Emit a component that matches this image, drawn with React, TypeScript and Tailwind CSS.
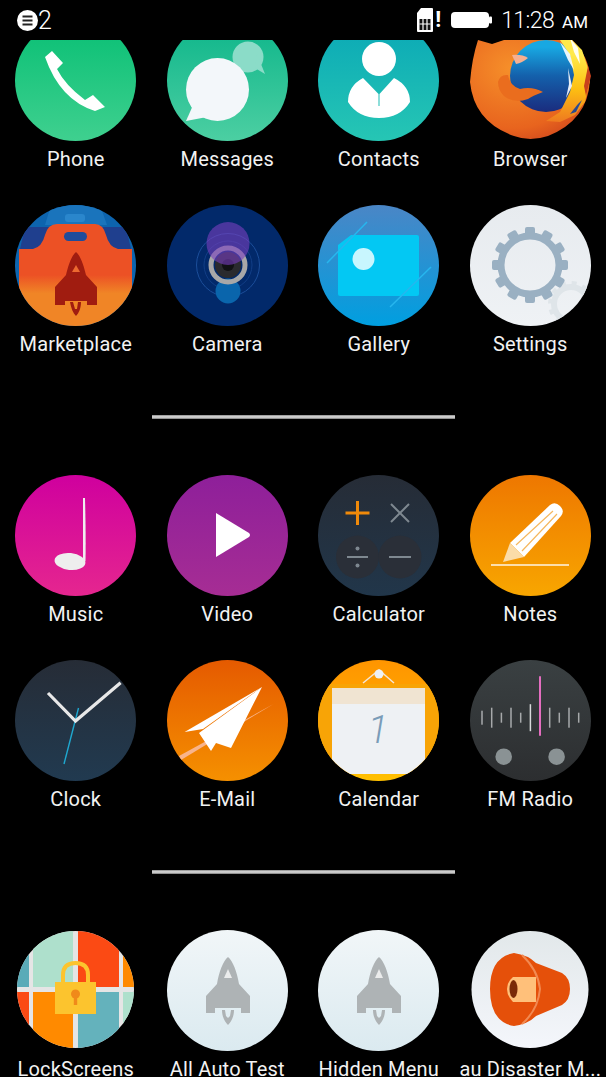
import type { ReactNode } from 'react';

function Disc({ id, from, to, children }: { id: string; from: string; to: string; children?: ReactNode }) {
  return (
    <svg viewBox="0 0 121 121" className="w-[121px] h-[121px] rounded-full overflow-hidden">
      <defs>
        <linearGradient id={id} x1="0" y1="0" x2="0" y2="1">
          <stop offset="0" stopColor={from} />
          <stop offset="1" stopColor={to} />
        </linearGradient>
      </defs>
      <rect width="121" height="121" fill={`url(#${id})`} />
      {children}
    </svg>
  );
}

function Rocket({ fill }: { fill: string }) {
  return (
    <>
      <path d="M61 27 C66 31 70 42 72 54 L83 66 L83 83 L74 83 L74 78 L48 78 L48 83 L39 83 L39 66 L50 54 C52 42 56 31 61 27Z" fill={fill} />
      <path d="M57 48 L61 39 L65 48Z" fill="#fff" opacity="0.75" />
      <path d="M55 80 L58 80 L59 86 L61 88 L63 86 L64 80 L67 80 C67 87 64 92 61 95 C58 92 55 87 55 80Z" fill={fill} />
    </>
  );
}

function Gear() {
  const teeth = [0, 30, 60, 90, 120, 150, 180, 210, 240, 270, 300, 330];
  return (
    <g>
      {teeth.map((a) => (
        <rect key={a} x="55" y="22" width="10" height="10" rx="2" fill="#9ab0c2" transform={`rotate(${a} 60 60)`} />
      ))}
      <circle cx="60" cy="60" r="29" fill="none" stroke="#9ab0c2" strokeWidth="7" />
    </g>
  );
}

const PhoneIcon = () => (
  <Disc id="phone" from="#08bf74" to="#3fd08f">
    <path d="M30 37 L37 31 L48 43 L42 49 Q50 65 70 80 L78 75 L90 87 L80 91 Q45 80 30 37Z" fill="#fff" />
  </Disc>
);

const MessagesIcon = () => (
  <Disc id="messages" from="#0db58a" to="#4ccfa2">
    <circle cx="81" cy="37" r="15.5" fill="#8bdcc8" />
    <path d="M88 48 L98 54 L90 34Z" fill="#8bdcc8" />
    <ellipse cx="50.5" cy="69.5" rx="31.5" ry="31.5" fill="#f3f7fa" />
    <path d="M19 101 L27 83 L40 97Z" fill="#f3f7fa" />
  </Disc>
);

const ContactsIcon = () => (
  <Disc id="contacts" from="#0aa8b6" to="#26c6b4">
    <circle cx="61" cy="39" r="17" fill="#fff" />
    <path d="M45 58 L60.5 74 L60.5 86 L61.5 86 L61.5 74 L76 58 Q92 66 92 82 Q82 98 61 98 Q40 98 30 82 Q30 66 45 58Z" fill="#fff" />
  </Disc>
);

const BrowserIcon = () => (
  <svg viewBox="0 0 121 121" className="w-[121px] h-[121px]">
    <defs>
      <radialGradient id="ffBody" cx="0.35" cy="0.3" r="0.85">
        <stop offset="0" stopColor="#f6902a" />
        <stop offset="0.7" stopColor="#e8641e" />
        <stop offset="1" stopColor="#c9401c" />
      </radialGradient>
      <linearGradient id="ffGlobe" x1="0" y1="0" x2="0" y2="1">
        <stop offset="0.1" stopColor="#18a8e2" />
        <stop offset="0.5" stopColor="#1460ab" />
        <stop offset="1" stopColor="#1a2c7e" />
      </linearGradient>
      <linearGradient id="ffFlame" x1="0" y1="0" x2="0" y2="1">
        <stop offset="0.2" stopColor="#ffe94a" />
        <stop offset="0.6" stopColor="#fdc012" />
        <stop offset="1" stopColor="#ee7a20" />
      </linearGradient>
    </defs>
    <path d="M8 20 L22 24 L40 18 L100 18 Q120 36 120 60 Q118 100 78 116 Q60 122 44 116 Q4 102 0 62 Q2 38 8 20Z" fill="url(#ffBody)" />
    <circle cx="76" cy="56" r="36" fill="url(#ffGlobe)" />
    <path d="M42 35 Q52 34 58 38 Q52 43 46 44Z" fill="#f6b090" />
    <path d="M28 62 Q30 54 38 55 Q40 66 50 69 Q62 66 73 72 Q62 76 58 79 Q44 84 34 76 Q28 70 28 62Z" fill="#ea6d1e" />
    <path d="M90 20 L100 18 L112 30 L118 48 L120 60 L115 82 L105 95 L90 102 L76 101 L90 92 L96 80 L100 72 L104 55 L100 35Z" fill="url(#ffFlame)" />
    <path d="M90 22 L100 34 L104 50 L98 40Z M100 18 L108 28 L110 44 L104 32Z M98 48 L102 66 L96 78 L99 64Z" fill="#fff" opacity="0.9" />
    <path d="M118 46 L121 56 L116 76 L114 66Z" fill="#c9401c" />
    <path d="M108 84 L112 80 L106 92 L100 94Z" fill="#2a4a90" />
  </svg>
);

const MarketplaceIcon = () => (
  <svg viewBox="0 0 121 121" className="w-[121px] h-[121px] rounded-full overflow-hidden">
    <defs>
      <linearGradient id="marketBag" x1="0" y1="0" x2="0" y2="1">
        <stop offset="0.5" stopColor="#ec5125" />
        <stop offset="0.68" stopColor="#f08526" />
      </linearGradient>
    </defs>
    <rect width="121" height="121" fill="#0d64ae" />
    <path d="M36 0 L85 0 L92 20 L30 20Z" fill="#1a74bc" />
    <rect x="50" y="9" width="20" height="8" rx="3" fill="#2a86cc" />
    <path d="M10 22 L35 22 L35 44 L5 44Z M86 22 L111 22 L116 44 L86 44Z" fill="#1f3f8e" />
    <path d="M4 44 L18 44 Q27 42 30 30 Q33 19 42 19 L80 19 Q88 19 91 30 Q94 42 103 44 L117 44 L117 121 L4 121Z" fill="url(#marketBag)" />
    <rect x="49" y="27" width="23" height="9" rx="4.5" fill="#1f4c9a" />
    <path d="M61 47 C66 51 69 62 71 70 L82 82 L82 100 L72 100 L72 96 L50 96 L50 100 L40 100 L40 82 L51 70 C53 62 56 51 61 47Z" fill="#a01c10" />
    <path d="M57 67 L61 60 L65 67Z" fill="#ec6a30" />
    <path d="M55 97 L58 97 L60 104 L62 104 L63 97 L66 97 C66 103 64 108 61 111 C58 108 56 103 55 97Z" fill="#a01c10" />
  </svg>
);

const CameraIcon = () => (
  <Disc id="camera" from="#02296a" to="#02296a">
    <circle cx="61" cy="60" r="31.5" fill="none" stroke="#1c4e9a" strokeWidth="1" />
    <circle cx="61" cy="60" r="24" fill="none" stroke="#123e86" strokeWidth="1" />
    <circle cx="61" cy="86" r="12.5" fill="#0a65ac" />
    <circle cx="61" cy="60" r="13" fill="#2a2a2e" />
    <circle cx="61" cy="60" r="6" fill="#111114" />
    <circle cx="61" cy="60" r="17" fill="none" stroke="#a8a8a8" strokeWidth="5" />
    <circle cx="61" cy="38.5" r="21.5" fill="#7a3fc0" opacity="0.6" />
  </Disc>
);

const GalleryIcon = () => (
  <Disc id="gallery" from="#4a86c6" to="#009fe0">
    <path d="M20 40 L33 30 L99 30 Q101 30 101 32 L101 89 Q101 91 99 91 L22 91 Q20 91 20 89Z" fill="#03c8f3" />
    <circle cx="45.5" cy="54" r="11" fill="#c8f6fe" />
    <path d="M9 58 L49 17 M72 102 L113 62" stroke="#27b6ee" strokeWidth="1.5" />
  </Disc>
);

const SettingsIcon = () => (
  <Disc id="settings" from="#e7ebef" to="#eff2f5">
    <circle cx="101" cy="99" r="17" fill="none" stroke="#dfe5e9" strokeWidth="6" />
    <circle cx="101" cy="99" r="21" fill="none" stroke="#dfe5e9" strokeWidth="4" strokeDasharray="5 6" />
    <Gear />
  </Disc>
);

const MusicIcon = () => (
  <Disc id="music" from="#cf009e" to="#e5268f">
    <path d="M68 23 L70 23 Q71 60 70.5 86 L68 86Z" fill="#eee" />
    <ellipse cx="55" cy="86.5" rx="15.5" ry="8.5" fill="#eee" transform="rotate(6 55 86.5)" />
  </Disc>
);

const VideoIcon = () => (
  <Disc id="video" from="#8e1f9a" to="#a62d94">
    <path d="M49 38 L82 58 Q84 60 82 62 L49 82Z" fill="#fff" />
  </Disc>
);

const CalculatorIcon = () => (
  <Disc id="calc" from="#262c36" to="#21364a">
    <circle cx="39.5" cy="82" r="21.5" fill="#2a2f38" />
    <circle cx="82" cy="82" r="21.5" fill="#2a2f38" />
    <path d="M27.5 38 L51.5 38 M39.5 26 L39.5 50" stroke="#f08a0a" strokeWidth="3" />
    <path d="M73 29 L91 47 M91 29 L73 47" stroke="#7e8890" strokeWidth="2" />
    <path d="M29 82 L50 82 M71 82 L93 82" stroke="#7e8890" strokeWidth="2" />
    <circle cx="39.5" cy="73.5" r="2" fill="#7e8890" />
    <circle cx="39.5" cy="90.5" r="2" fill="#7e8890" />
  </Disc>
);

const NotesIcon = () => (
  <Disc id="notes" from="#ee7700" to="#f8a600">
    <path d="M40 68 L80 30 Q85 26 90 31 Q95 36 91 41 L54 82Z" fill="#fff" />
    <path d="M33 87 L40 68 L54 82Z" fill="#fbdca8" />
    <path d="M46 70 L83 36 M52 76 L87 39" stroke="#f5b860" strokeWidth="1.2" />
    <path d="M21 90 L99 90" stroke="#fff" strokeWidth="1.6" opacity="0.9" />
  </Disc>
);

const ClockIcon = () => (
  <Disc id="clock" from="#262c36" to="#213a50">
    <path d="M63.5 48 L49 104" stroke="#1fa8d0" strokeWidth="1.4" />
    <path d="M33 33 L60.5 61 L105.6 22.7" fill="none" stroke="#e8e8e8" strokeWidth="3.2" />
  </Disc>
);

const EmailIcon = () => (
  <Disc id="email" from="#e55a00" to="#f59000">
    <path d="M12 96 L106.5 44 L14 100Z" fill="#f8b48c" />
    <path d="M95 27 L17.6 72 L36 69Z" fill="#fff" />
    <path d="M95 27 L32 73 L44 91 L49 83 L64 88Z" fill="#fff" />
  </Disc>
);

const CalendarIcon = () => (
  <Disc id="calendar" from="#ff9500" to="#ffc000">
    <rect x="0" y="24" width="121" height="90" fill="#f8a406" />
    <path d="M45 23 L61 10 L76 23" fill="none" stroke="#f3e6d6" strokeWidth="1.5" />
    <circle cx="61" cy="14" r="4.5" fill="#eef1f4" />
    <rect x="14" y="28" width="93" height="16" fill="#f0e4d2" />
    <rect x="14" y="44" width="93" height="70" fill="#eef1f4" />
    <text x="60" y="83" textAnchor="middle" fontFamily="Roboto, sans-serif" fontStyle="italic" fontWeight="300" fontSize="38" fill="#7a9cb8">1</text>
  </Disc>
);

const RadioIcon = () => {
  const bars = [
    [12, 7], [21.7, 10], [31.4, 5], [41, 10], [50.7, 5], [60.4, 13.5], [79.7, 10], [89.3, 5], [99, 10], [108.7, 5],
  ];
  return (
    <Disc id="radio" from="#3a4042" to="#2c2e30">
      {bars.map(([x, h]) => (
        <rect key={x} x={x - 0.75} y={57.7 - h} width="1.5" height={h * 2} fill="#d8dadb" opacity={h > 12 ? 1 : 0.7} />
      ))}
      <rect x="69" y="16" width="2" height="60" rx="1" fill="#e46ec0" />
      <circle cx="33.7" cy="96.7" r="8.3" fill="#8a9294" />
      <circle cx="86.6" cy="96.7" r="8.3" fill="#8a9294" />
    </Disc>
  );
};

const LockIcon = () => (
  <svg viewBox="0 0 121 121" className="w-[121px] h-[121px]">
    <defs>
      <clipPath id="lockClip">
        <circle cx="60.5" cy="59.5" r="58.5" />
      </clipPath>
    </defs>
    <g clipPath="url(#lockClip)">
      <rect x="0" y="0" width="121" height="121" fill="#e5e5e5" />
      <rect x="0" y="0" width="14" height="57" fill="#5aabb8" />
      <rect x="18" y="0" width="40" height="57" fill="#aee0cc" />
      <rect x="63" y="0" width="41" height="57" fill="#fb4a14" />
      <rect x="108" y="0" width="13" height="57" fill="#ff8a00" />
      <rect x="0" y="62" width="14" height="59" fill="#fb4a14" />
      <rect x="18" y="62" width="40" height="59" fill="#ff8a00" />
      <rect x="63" y="62" width="41" height="59" fill="#64b2bc" />
      <rect x="108" y="62" width="13" height="59" fill="#aee0cc" />
    </g>
    <path d="M48 53 L48 45 Q48 33 60.5 33 Q73 33 73 45 L73 53" fill="none" stroke="#fcc42e" strokeWidth="4" />
    <rect x="40" y="52" width="41" height="32" fill="#fcc42e" />
    <circle cx="60.5" cy="64" r="4.5" fill="#f08a1a" />
    <rect x="58.8" y="65" width="3.4" height="10" fill="#f08a1a" />
  </svg>
);

const TestIcon = ({ id }: { id: string }) => (
  <Disc id={id} from="#f1f6f8" to="#dbeaf0">
    <Rocket fill="#aeb3b5" />
  </Disc>
);

const DisasterIcon = () => (
  <svg viewBox="0 0 121 121" className="w-[121px] h-[121px]">
    <defs>
      <linearGradient id="disaster" x1="0" y1="0" x2="0" y2="1">
        <stop offset="0" stopColor="#e2e8ea" />
        <stop offset="1" stopColor="#f4f6fb" />
      </linearGradient>
    </defs>
    <circle cx="60" cy="59.5" r="58.5" fill="url(#disaster)" />
    <path d="M44 23 Q58 25 66 33 L92 43 Q100 48 100 59 Q100 70 92 75 L66 86 Q58 94 44 96 Q20 92 20 59 Q20 27 44 23Z" fill="#e5500a" />
    <path d="M52 25 Q68 40 70 59 Q68 80 52 94" fill="none" stroke="#f28a52" strokeWidth="2" />
    <path d="M43 47 L66 47 L66 72 L43 72 Q37 66 37 59 Q37 52 43 47Z" fill="#ffc07a" />
    <ellipse cx="43.5" cy="59" rx="4" ry="9" fill="#7a2a08" />
  </svg>
);

const sectionOne = [
  { label: 'Phone', icon: <PhoneIcon /> },
  { label: 'Messages', icon: <MessagesIcon /> },
  { label: 'Contacts', icon: <ContactsIcon /> },
  { label: 'Browser', icon: <BrowserIcon /> },
  { label: 'Marketplace', icon: <MarketplaceIcon /> },
  { label: 'Camera', icon: <CameraIcon /> },
  { label: 'Gallery', icon: <GalleryIcon /> },
  { label: 'Settings', icon: <SettingsIcon /> },
];

const sectionTwo = [
  { label: 'Music', icon: <MusicIcon /> },
  { label: 'Video', icon: <VideoIcon /> },
  { label: 'Calculator', icon: <CalculatorIcon /> },
  { label: 'Notes', icon: <NotesIcon /> },
  { label: 'Clock', icon: <ClockIcon /> },
  { label: 'E-Mail', icon: <EmailIcon /> },
  { label: 'Calendar', icon: <CalendarIcon /> },
  { label: 'FM Radio', icon: <RadioIcon /> },
];

const sectionThree = [
  { label: 'LockScreens', icon: <LockIcon /> },
  { label: 'All Auto Test', icon: <TestIcon id="autotest" /> },
  { label: 'Hidden Menu', icon: <TestIcon id="hidden" /> },
  { label: 'au Disaster M...', icon: <DisasterIcon /> },
];

function AppGrid({ apps }: { apps: { label: string; icon: ReactNode }[] }) {
  return (
    <div className="grid grid-cols-4 auto-rows-[185px]">
      {apps.map((app) => (
        <div key={app.label} className="flex flex-col items-center">
          {app.icon}
          <span className="text-[20px] leading-[36px] tracking-[0.2px] text-[#f2f2f2] whitespace-nowrap">{app.label}</span>
        </div>
      ))}
    </div>
  );
}

function Divider() {
  return (
    <div className="mt-[25px] mb-[56px] mx-auto w-[303px] h-[4px] bg-gradient-to-b from-[#8a8a8a] via-[#e4e4e4] to-[#777777]" />
  );
}

function StatusBar() {
  return (
    <div className="h-10 shrink-0 flex items-center justify-between pl-[17px] pr-[18px] text-white bg-black relative z-10">
      <div className="flex items-center">
        <svg viewBox="0 0 21 21" className="w-[21px] h-[21px]">
          <circle cx="10.5" cy="10.5" r="10.5" fill="#fff" />
          <path d="M5.5 6.5 H15.5 M5.5 10.5 H15.5 M5.5 14.5 H15.5" stroke="#222" strokeWidth="2" />
        </svg>
        <span className="text-[25px] leading-none font-light">2</span>
      </div>
      <div className="flex items-center">
        <svg viewBox="0 0 16 24" className="w-4 h-6">
          <path d="M4 0 H15 Q16 0 16 1 V23 Q16 24 15 24 H1 Q0 24 0 23 V5Z" fill="#fff" />
          <path d="M2.5 11 H13.5 V22 H2.5Z" fill="#111" />
          <path d="M6 11 V22 M10 11 V22 M2.5 16 H13.5" stroke="#fff" strokeWidth="1.2" />
        </svg>
        <span className="ml-[2px] text-[22px] leading-none font-bold">!</span>
        <svg viewBox="0 0 41 16" className="ml-[10px] w-[41px] h-4">
          <rect x="0" y="0" width="38" height="16" rx="4" fill="#fff" />
          <rect x="38" y="4.5" width="3" height="7" rx="1" fill="#fff" />
        </svg>
        <span className="ml-[9px] text-[23px] leading-none font-light tracking-[-0.6px]">11:28</span>
        <span className="ml-[8px] text-[17px] leading-none font-normal mt-1">AM</span>
      </div>
    </div>
  );
}

export default function App() {
  return (
    <div className="w-[606px] h-[1077px] bg-black flex flex-col overflow-hidden font-['Roboto',sans-serif]">
      <StatusBar />
      <div className="-mt-5">
        <AppGrid apps={sectionOne} />
        <Divider />
        <AppGrid apps={sectionTwo} />
        <Divider />
        <AppGrid apps={sectionThree} />
      </div>
    </div>
  );
}
